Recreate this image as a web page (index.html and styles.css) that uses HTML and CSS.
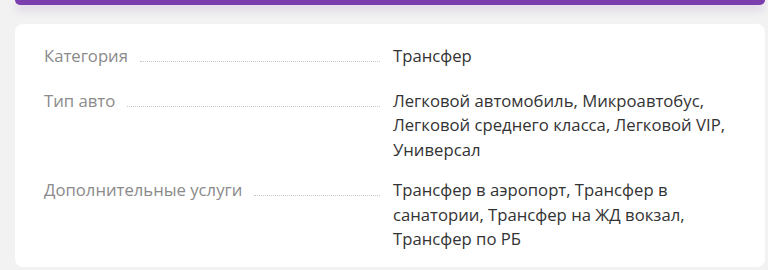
FILE: index.html
```html
<!DOCTYPE html>
<html lang="ru">
<head>
<meta charset="utf-8">
<link rel="stylesheet" href="styles.css">
</head>
<body>
<div class="page">
  <div class="topbar"></div>
  <div class="card">
    <div class="row row-first">
      <div class="label"><span class="label-text">Категория</span><span class="dots"></span></div>
      <div class="value">Трансфер</div>
    </div>
    <div class="row">
      <div class="label"><span class="label-text">Тип авто</span><span class="dots"></span></div>
      <div class="value">Легковой автомобиль, Микроавтобус, Легковой среднего класса, Легковой VIP, Универсал</div>
    </div>
    <div class="row">
      <div class="label"><span class="label-text">Дополнительные услуги</span><span class="dots"></span></div>
      <div class="value">Трансфер в аэропорт, Трансфер в санатории, Трансфер на ЖД вокзал, Трансфер по РБ</div>
    </div>
  </div>
</div>
</body>
</html>
```
FILE: styles.css
```css
html, body {
  margin: 0;
  padding: 0;
  background: #f2f2f2;
}
.page {
  padding: 0 3px 0 15px;
  font-family: "Open Sans", sans-serif;
}
.topbar {
  height: 5px;
  background: #7a3ead;
  border-radius: 0 0 8px 8px;
  box-shadow: 0 4px 10px rgba(122, 62, 173, 0.25);
}
.card {
  margin-top: 19px;
  background: #fff;
  border-radius: 8px;
  padding: 20px 20px 18px 29px;
  display: flex;
  flex-direction: column;
  gap: 16px;
  height: 205px;
}
.row {
  display: flex;
  font-size: 16.7px;
  line-height: 24.5px;
}
.row-first {
  margin-bottom: 4px;
}
.label {
  width: 336px;
  flex: none;
  display: flex;
  align-items: baseline;
  margin-right: 13px;
  color: #8a8a8a;
}
.label-text {
  flex: none;
  margin-right: 12px;
}
.dots {
  flex: 1;
  border-bottom: 1px dotted #c8c8c8;
  height: 1px;
}
.value {
  color: #333;
  width: 352px;
}
```
